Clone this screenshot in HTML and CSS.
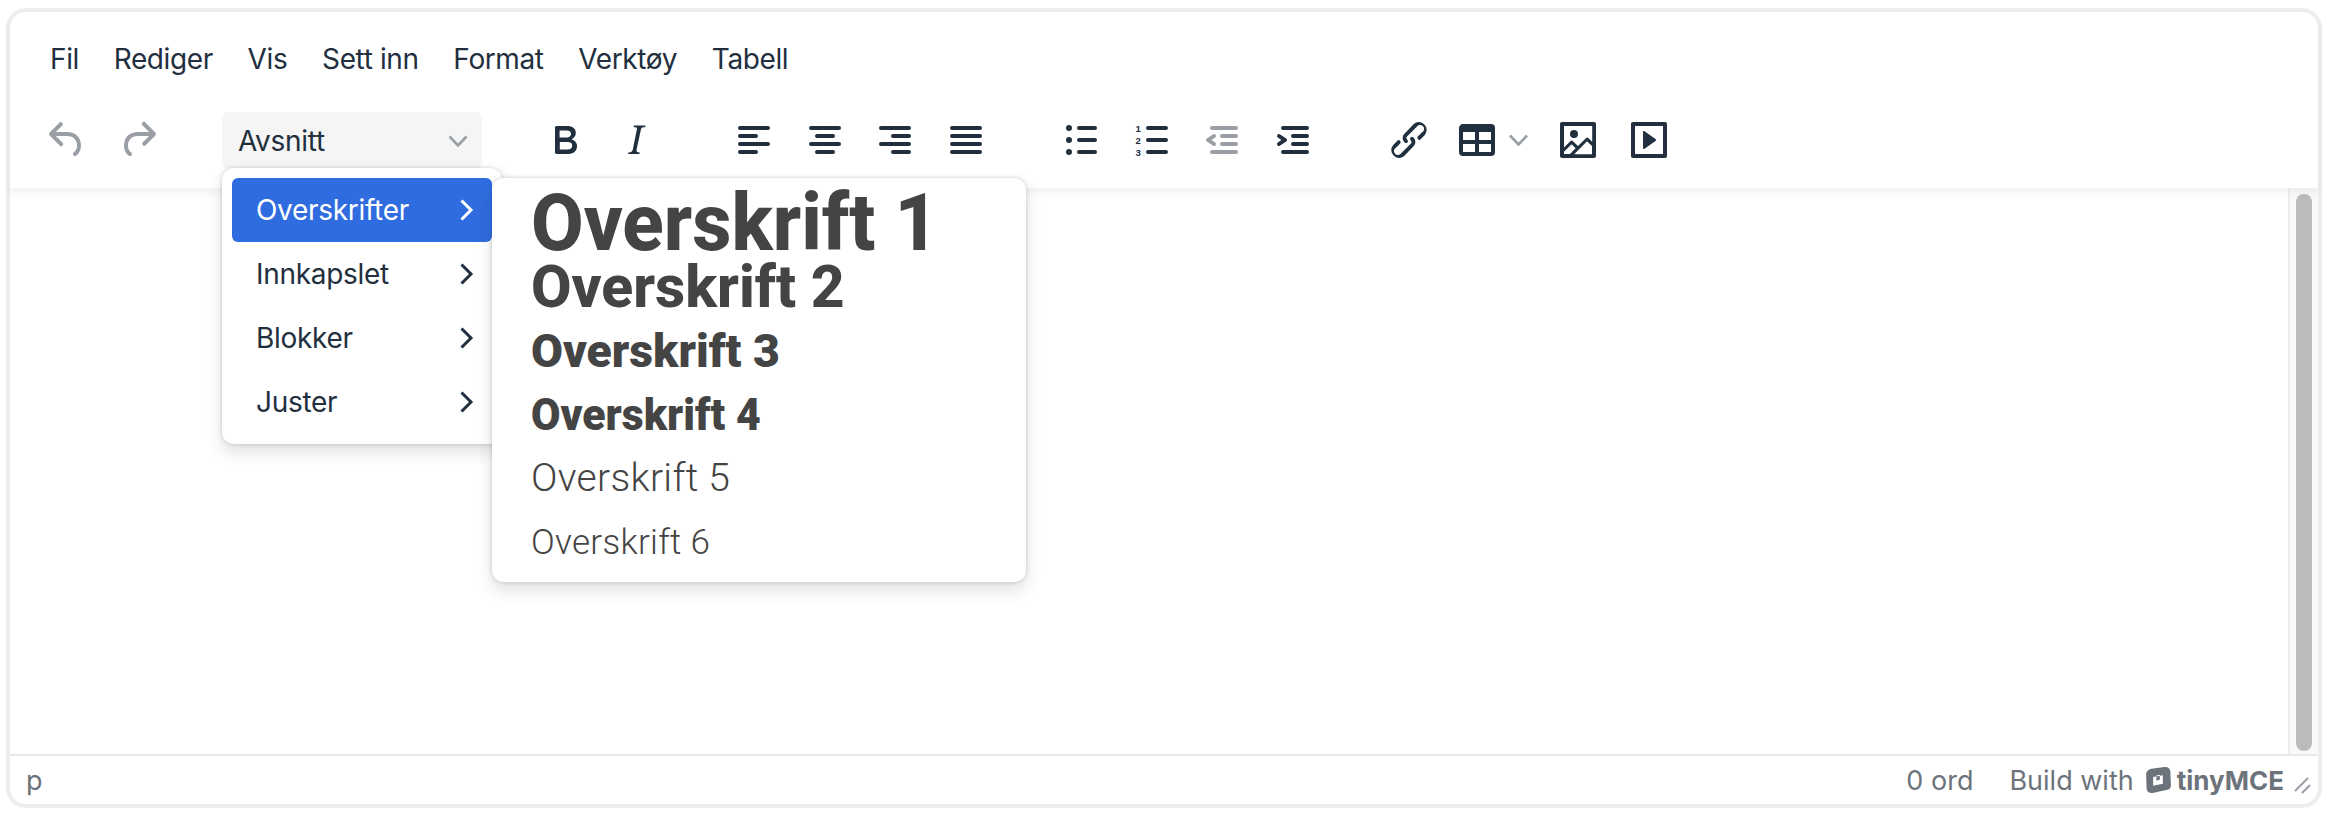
FILE: index.html
```html
<!DOCTYPE html>
<html lang="nb">
  <head>
    <meta charset="UTF-8" />
    <title>TinyMCE</title>
    <link rel="stylesheet" href="styles.css">
  </head>
  <body>
    <div class="editor">
      <header class="header">
        <nav class="menubar">
          <span>Fil</span>
          <span>Rediger</span>
          <span>Vis</span>
          <span>Sett inn</span>
          <span>Format</span>
          <span>Verktøy</span>
          <span>Tabell</span>
        </nav>
        <div class="toolbar">
          <div class="group group-history">
            <button class="btn disabled"><svg viewBox="0 0 24 24"><path d="M6.4 8H12c3.7 0 6.2 2 6.8 5.1.6 2.7-.4 5.6-2.3 6.8a1 1 0 0 1-1-1.8c1.1-.6 1.8-2.7 1.4-4.6-.5-2.1-2.1-3.5-4.9-3.5H6.4l3.3 3.3a1 1 0 1 1-1.4 1.4l-5-5a1 1 0 0 1 0-1.4l5-5a1 1 0 0 1 1.4 1.4L6.4 8Z"/></svg></button>
            <button class="btn disabled"><svg viewBox="0 0 24 24"><path d="M17.6 10H12c-2.8 0-4.4 1.4-4.9 3.5-.4 2 .3 4 1.4 4.6a1 1 0 1 1-1 1.8c-2-1.2-2.9-4.1-2.3-6.8.6-3 3-5.1 6.8-5.1h5.6l-3.3-3.3a1 1 0 1 1 1.4-1.4l5 5a1 1 0 0 1 0 1.4l-5 5a1 1 0 0 1-1.4-1.4l3.3-3.3Z"/></svg></button>
          </div>
          <div class="select">
            <span>Avsnitt</span>
            <svg class="caret" viewBox="0 0 20 12"><polyline points="1.5,1.5 10,10.5 18.5,1.5"/></svg>
          </div>
          <div class="group group-format">
            <button class="btn"><svg viewBox="0 0 24 24"><path d="M7.8 19c-.3 0-.5 0-.6-.2l-.2-.5V5.700c0-.2 0-.4.2-.5l.6-.2h5c1.500 0 2.700.3 3.500 1 .7.6 1.100 1.400 1.100 2.500a3 3 0 0 1-.6 1.900c-.4.6-1 1-1.600 1.200.4.100.9.3 1.300.6s.8.7 1 1.200c.4.4.5 1 .5 1.600 0 1.300-.4 2.300-1.300 3-.8.7-2.100 1-3.800 1H7.800Zm5-8.300c.6 0 1.200-.1 1.600-.5.4-.3.6-.7.6-1.300 0-1.100-.8-1.700-2.300-1.700H9.300v3.500h3.400Zm.5 6c.7 0 1.300-.1 1.700-.4.4-.4.6-.9.6-1.500s-.2-1-.7-1.400c-.4-.3-1-.4-2-.4H9.400v3.800h4Z"/></svg></button>
            <button class="btn"><svg viewBox="0 0 24 24"><path d="m16.7 4.7-.1.9h-.3c-.6 0-1 0-1.400.3-.3.3-.4.6-.5 1.100l-2.100 9.800v.6c0 .5.4.8 1.400.8h.2l-.2.8H8l.2-.8h.2c1.100 0 1.800-.5 2-1.500l2-9.800.1-.5c0-.6-.4-.8-1.400-.8h-.3l.2-.9h5.800Z"/></svg></button>
          </div>
          <div class="group group-align">
            <button class="btn"><svg viewBox="0 0 24 24"><path d="M5 5h14a1 1 0 0 1 0 2H5a1 1 0 1 1 0-2Zm0 4h8a1 1 0 0 1 0 2H5a1 1 0 1 1 0-2Zm0 8h8a1 1 0 0 1 0 2H5a1 1 0 0 1 0-2Zm0-4h14a1 1 0 0 1 0 2H5a1 1 0 0 1 0-2Z"/></svg></button>
            <button class="btn"><svg viewBox="0 0 24 24"><path d="M5 5h14a1 1 0 0 1 0 2H5a1 1 0 1 1 0-2Zm3 4h8a1 1 0 0 1 0 2H8a1 1 0 1 1 0-2Zm0 8h8a1 1 0 0 1 0 2H8a1 1 0 0 1 0-2Zm-3-4h14a1 1 0 0 1 0 2H5a1 1 0 0 1 0-2Z"/></svg></button>
            <button class="btn"><svg viewBox="0 0 24 24"><path d="M5 5h14a1 1 0 0 1 0 2H5a1 1 0 1 1 0-2Zm6 4h8a1 1 0 0 1 0 2h-8a1 1 0 0 1 0-2Zm0 8h8a1 1 0 0 1 0 2h-8a1 1 0 0 1 0-2Zm-6-4h14a1 1 0 0 1 0 2H5a1 1 0 0 1 0-2Z"/></svg></button>
            <button class="btn"><svg viewBox="0 0 24 24"><path d="M5 5h14a1 1 0 0 1 0 2H5a1 1 0 1 1 0-2Zm0 4h14a1 1 0 0 1 0 2H5a1 1 0 1 1 0-2Zm0 4h14a1 1 0 0 1 0 2H5a1 1 0 0 1 0-2Zm0 4h14a1 1 0 0 1 0 2H5a1 1 0 0 1 0-2Z"/></svg></button>
          </div>
          <div class="group group-lists">
            <button class="btn"><svg viewBox="0 0 24 24"><path d="M11 5h8a1 1 0 0 1 0 2h-8a1 1 0 0 1 0-2Zm0 6h8a1 1 0 0 1 0 2h-8a1 1 0 0 1 0-2Zm0 6h8a1 1 0 0 1 0 2h-8a1 1 0 0 1 0-2Z"/><circle cx="6" cy="6" r="1.5"/><circle cx="6" cy="12" r="1.5"/><circle cx="6" cy="18" r="1.5"/></svg></button>
            <button class="btn"><svg viewBox="0 0 24 24"><path d="M10 5h9a1 1 0 0 1 0 2h-9a1 1 0 1 1 0-2Zm0 6h9a1 1 0 0 1 0 2h-9a1 1 0 0 1 0-2Zm0 6h9a1 1 0 0 1 0 2h-9a1 1 0 0 1 0-2Z"/><text class="num" x="3.800" y="7.900">1</text><text class="num" x="3.800" y="13.900">2</text><text class="num" x="3.800" y="19.900">3</text></svg></button>
            <button class="btn disabled"><svg viewBox="0 0 24 24"><path d="M7 5h12a1 1 0 0 1 0 2H7a1 1 0 1 1 0-2Zm5 4h7a1 1 0 0 1 0 2h-7a1 1 0 0 1 0-2Zm0 4h7a1 1 0 0 1 0 2h-7a1 1 0 0 1 0-2Zm-5 4h12a1 1 0 0 1 0 2H7a1 1 0 0 1 0-2Zm1.600-3.800a1 1 0 0 1-1.200 1.600l-3-2a1 1 0 0 1 0-1.600l3-2a1 1 0 0 1 1.200 1.600L6.800 12l1.800 1.200Z"/></svg></button>
            <button class="btn"><svg viewBox="0 0 24 24"><path d="M7 5h12a1 1 0 0 1 0 2H7a1 1 0 1 1 0-2Zm5 4h7a1 1 0 0 1 0 2h-7a1 1 0 0 1 0-2Zm0 4h7a1 1 0 0 1 0 2h-7a1 1 0 0 1 0-2Zm-5 4h12a1 1 0 0 1 0 2H7a1 1 0 0 1 0-2Zm-2.600-3.800L6.200 12l-1.800-1.200a1 1 0 0 1 1.200-1.600l3 2a1 1 0 0 1 0 1.600l-3 2a1 1 0 1 1-1.200-1.600Z"/></svg></button>
          </div>
          <div class="group group-insert">
            <button class="btn"><svg viewBox="0 0 24 24"><path d="M6.200 12.300a1 1 0 0 1 1.400 1.400l-2 2a2 2 0 1 0 2.600 2.800l4.800-4.800a1 1 0 0 0 0-1.400 1 1 0 1 1 1.400-1.300 2.900 2.900 0 0 1 0 4L9.600 20a3.900 3.900 0 0 1-5.500-5.500l2-2Zm11.600-.6a1 1 0 0 1-1.400-1.400l2-2a2 2 0 1 0-2.600-2.800L11 10.300a1 1 0 0 0 0 1.400A1 1 0 1 1 9.600 13a2.900 2.900 0 0 1 0-4L14.400 4a3.900 3.900 0 0 1 5.500 5.500l-2 2Z"/></svg></button>
            <button class="btn btn-split"><svg viewBox="0 0 24 24"><path d="M19 4a2 2 0 0 1 2 2v12a2 2 0 0 1-2 2H5a2 2 0 0 1-2-2V6c0-1.100.9-2 2-2h14Zm0 10h-6v4h6v-4Zm-8 0H5v4h6v-4Zm8-6h-6v4h6V8Zm-8 0H5v4h6V8Z"/></svg><svg class="caret" viewBox="0 0 20 12"><polyline points="1.5,1.5 10,10.5 18.5,1.5"/></svg></button>
            <button class="btn"><svg viewBox="0 0 24 24"><path d="m5 15.700 3.300-3.200c.3-.3.7-.3 1 0L12 15l4.100-4c.3-.4.8-.4 1 0l2 1.900V5H5v10.700ZM5 18v1h3l2.800-2.900-2-2L5 17.900Zm14-3-2.500-2.400-6.400 6.500H19v-4ZM4 3h16c.6 0 1 .4 1 1v16c0 .6-.4 1-1 1H4a1 1 0 0 1-1-1V4c0-.6.4-1 1-1Zm6 8a2 2 0 1 0 0-4 2 2 0 0 0 0 4Z"/></svg></button>
            <button class="btn"><svg viewBox="0 0 24 24"><path d="M4 3h16c.6 0 1 .4 1 1v16c0 .6-.4 1-1 1H4a1 1 0 0 1-1-1V4c0-.6.4-1 1-1Zm1 2v14h14V5H5Zm4.800 2.600 5.600 4a.5.5 0 0 1 0 .8l-5.600 4A.5.5 0 0 1 9 16V8a.5.5 0 0 1 .8-.4Z"/></svg></button>
          </div>
        </div>
      </header>

      <div class="main">
        <div class="content"></div>
        <div class="scrollbar"><div class="thumb"></div></div>
      </div>

      <footer class="statusbar">
        <span class="path">p</span>
        <span class="words">0 ord</span>
        <span class="brand">Build with</span>
        <svg class="logo" viewBox="0 0 26 26"><path fill-rule="evenodd" d="M7 2.500 19 1c3-.4 5.400 1.300 5.500 4.200l.5 12.600c.1 2-1.200 3.800-3.200 4.300L8 25c-3 .6-5.500-1.300-5.600-4.200L2 7.500c-.1-2.200 2.400-4.600 5-5Zm1.500 7.800v8l9-1.800V8.500l-9 1.800Zm3-1.500v4.600l3.200-.6V8.200l-3.200.6Z"/></svg>
        <span class="tiny">tinyMCE</span>
        <svg class="grip" viewBox="0 0 18 18"><path d="M1 14 14 1M8 16l8-8"/></svg>
      </footer>

      <div class="menu">
        <div class="menu-item active"><span>Overskrifter</span><svg viewBox="0 0 16 24"><polyline points="2.500,2.500 12,12 2.500,21.500"/></svg></div>
        <div class="menu-item"><span>Innkapslet</span><svg viewBox="0 0 16 24"><polyline points="2.500,2.500 12,12 2.500,21.500"/></svg></div>
        <div class="menu-item"><span>Blokker</span><svg viewBox="0 0 16 24"><polyline points="2.500,2.500 12,12 2.500,21.500"/></svg></div>
        <div class="menu-item"><span>Juster</span><svg viewBox="0 0 16 24"><polyline points="2.500,2.500 12,12 2.500,21.500"/></svg></div>
      </div>

      <div class="submenu">
        <div class="heading h1"><span>Overskrift 1</span></div>
        <div class="heading h2"><span>Overskrift 2</span></div>
        <div class="heading h3"><span>Overskrift 3</span></div>
        <div class="heading h4"><span>Overskrift 4</span></div>
        <div class="heading h5"><span>Overskrift 5</span></div>
        <div class="heading h6"><span>Overskrift 6</span></div>
      </div>
    </div>
  </body>
</html>
```

FILE: styles.css
```css
:root {
  --ink: #222f3e;
  --muted: #9a9fa6;
  --line: #eeeeee;
  --status: #6d737b;
  --blue: #2f6cdf;
}
* {
  margin: 0;
  padding: 0;
  box-sizing: border-box;
}
html,
body {
  height: 100%;
}
body {
  padding: 8px 10px 8px 6px;
  background-color: #fff;
  font-family: Inter, "Liberation Sans", sans-serif;
  color: var(--ink);
}

.editor {
  position: relative;
  display: flex;
  flex-direction: column;
  height: 800px;
  border: 4px solid var(--line);
  border-radius: 20px;
  background-color: #fff;
}

.header {
  position: relative;
  z-index: 1;
  flex: none;
  height: 176px;
  border-radius: 16px 16px 0 0;
  background-color: #fff;
  box-shadow: 0 4px 8px rgba(34, 47, 62, 0.07);
}

.menubar {
  display: flex;
  align-items: center;
  gap: 34.8px;
  height: 66px;
  padding: 28px 0 0 40px;
  font-size: 28px;
  letter-spacing: -0.4px;
}

.toolbar {
  display: flex;
  align-items: center;
  height: 56px;
  margin-top: 34px;
  padding-left: 22px;
}

.group {
  display: flex;
}

.btn {
  display: flex;
  align-items: center;
  justify-content: center;
  width: 70.5px;
  height: 56px;
  border: none;
  background: none;
  color: var(--ink);
}
.btn svg {
  width: 48px;
  height: 48px;
  fill: currentColor;
}
.btn.disabled {
  color: var(--muted);
}
.btn-split {
  justify-content: flex-start;
  width: 98.5px;
  padding-left: 8px;
}
.btn svg.caret {
  width: 21px;
  height: 12px;
  margin-left: 7px;
  fill: none;
}

.caret {
  fill: none;
  stroke: var(--muted);
  stroke-width: 2.6;
}

.num {
  font-family: "Liberation Sans", sans-serif;
  font-size: 4.8px;
  font-weight: 700;
}

.select {
  display: flex;
  align-items: center;
  justify-content: space-between;
  width: 260px;
  height: 56px;
  margin-left: 49px;
  padding: 2px 14px 0 16px;
  border-radius: 6px;
  background-color: #f5f5f5;
  font-size: 28px;
  letter-spacing: -0.3px;
}
.select .caret {
  width: 20px;
  height: 12px;
}

.group-format {
  margin-left: 48px;
}
.group-align {
  margin-left: 48px;
}
.group-lists {
  margin-left: 45px;
}
.group-insert {
  margin-left: 46px;
}

.main {
  display: flex;
  flex: 1;
  min-height: 0;
}
.content {
  flex: 1;
}
.scrollbar {
  flex: none;
  width: 30px;
  padding: 6px 6px 3px 6px;
  border-left: 2px solid var(--line);
  background-color: #f9f9f9;
}
.thumb {
  width: 16px;
  height: 100%;
  border-radius: 8px;
  background-color: #bbbbbb;
}

.statusbar {
  display: flex;
  align-items: center;
  flex: none;
  height: 50px;
  padding: 0 6px 0 16px;
  border-top: 2px solid #e8e8e8;
  font-size: 27px;
  color: var(--status);
}
.path {
  flex: 1;
}
.words {
  margin-right: 36px;
}
.logo {
  width: 28px;
  height: 28px;
  margin-left: 10px;
  fill: currentColor;
}
.tiny {
  margin-left: 5px;
  font-size: 26px;
  font-weight: 700;
}
.grip {
  width: 18px;
  height: 18px;
  margin: 12px 0 0 10px;
  fill: none;
  stroke: #9a9fa6;
  stroke-width: 2;
}

.menu {
  position: absolute;
  z-index: 2;
  top: 156px;
  left: 212px;
  width: 280px;
  padding: 10px;
  border-radius: 12px;
  background-color: #fff;
  box-shadow: 0 0 4px rgba(34, 47, 62, 0.2), 0 8px 16px rgba(34, 47, 62, 0.15);
}
.menu-item {
  display: flex;
  align-items: center;
  justify-content: space-between;
  height: 64px;
  padding: 0 17px 0 24px;
  border-radius: 6px;
  font-size: 28px;
  letter-spacing: -0.3px;
}
.menu-item svg {
  width: 16px;
  height: 24px;
  fill: none;
  stroke: currentColor;
  stroke-width: 3;
}
.menu-item.active {
  background-color: var(--blue);
  color: #fff;
}

.submenu {
  position: absolute;
  z-index: 3;
  top: 166px;
  left: 482px;
  width: 534px;
  height: 404px;
  padding: 8px 0 9px 39px;
  border-radius: 12px;
  background-color: #fff;
  color: #444444;
  box-shadow: 0 0 4px rgba(34, 47, 62, 0.2), 0 8px 16px rgba(34, 47, 62, 0.15);
}
.heading {
  display: flex;
  align-items: center;
  height: 64px;
  padding-top: 2px;
  font-family: Roboto, sans-serif;
  white-space: nowrap;
}
.heading span {
  display: inline-block;
  transform-origin: left center;
}
.h1 {
  height: 66px;
  padding-top: 8px;
  font-size: 80px;
  font-weight: 800;
}
.h1 span {
  transform: scaleX(0.955);
}
.h2 {
  height: 65px;
  padding-top: 3px;
  font-size: 60px;
  font-weight: 800;
}
.h2 span {
  transform: scaleX(0.98);
}
.h3 {
  font-size: 47px;
  font-weight: 900;
}
.h3 span {
  transform: scaleX(0.985);
}
.h4 {
  font-size: 45px;
  font-weight: 900;
}
.h4 span {
  transform: scaleX(0.95);
}
.h5 {
  font-size: 39px;
  font-weight: 300;
  letter-spacing: 0.3px;
}
.h6 {
  font-size: 35px;
  font-weight: 300;
  letter-spacing: 0.3px;
}
```
